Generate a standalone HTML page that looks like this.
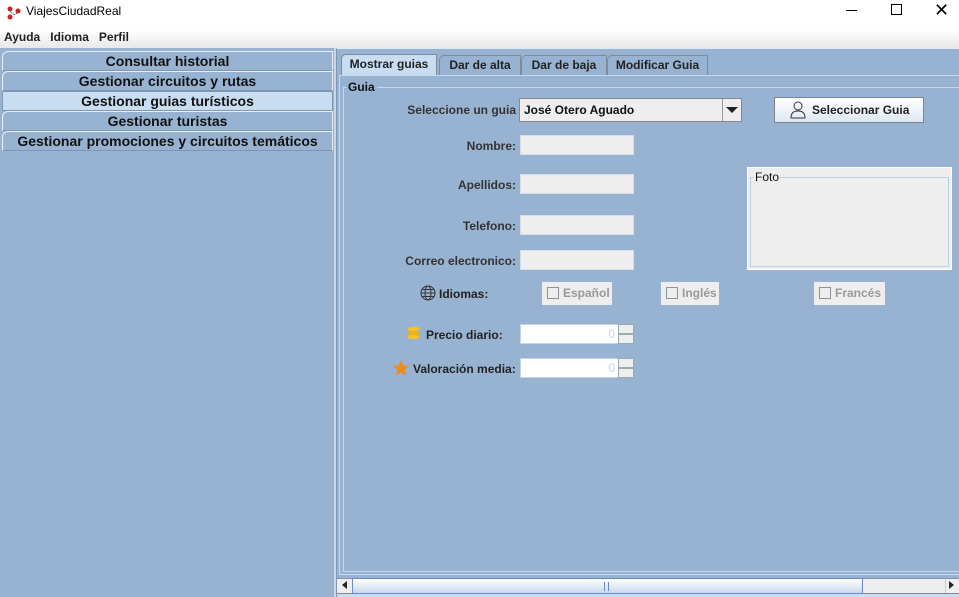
<!DOCTYPE html>
<html><head><style>
*{margin:0;padding:0;box-sizing:border-box}
body{width:959px;height:597px;position:relative;overflow:hidden;background:#98b3d1;font-family:"Liberation Sans",sans-serif;font-size:12px;font-weight:bold;color:#222}
.a{position:absolute}
.lb{text-align:right;color:#333}
.tf{position:absolute;background:#eeeeee;border:1px solid #d6dde6;height:20px;width:114px}
.nav{position:absolute;left:2px;width:331px;height:20px;border:1px solid #e8eef6;border-bottom-color:#7f95b0;background:#98b3d1;text-align:center;font-size:14px;line-height:18px;color:#111;border-radius:6px 0 0 0}
.tab{position:absolute;top:55px;height:20px;border:1px solid #7f8a99;border-bottom:none;background:#98b3d1;text-align:center;line-height:19px;font-size:12px;color:#222;border-radius:5px 0 0 0}
.cb{position:absolute;background:#eeeeee;height:23px;color:#999;line-height:23px;padding-left:5px}
.cb i{display:inline-block;width:12px;height:12px;border:1px solid #8a929c;vertical-align:-2px;margin-right:4px;background:#eee}
.sp{position:absolute;width:114px;height:20px;background:#fff;border:1px solid #c5d4e6;color:#c5d4e6;text-align:right;line-height:18px;padding-right:18px;font-weight:normal}
.sp b{position:absolute;right:-1px;width:16px;height:10px;border:1px solid #9aa;background:#eee}
</style></head><body>
<div class="a" style="left:0;top:0;width:959px;height:30px;background:#fff"></div>
<div class="a" style="left:6px;top:5px;width:14px;height:16px"><svg width="16" height="16"><circle cx="4" cy="4" r="2.5" fill="#c22"/><circle cx="4" cy="12" r="2.5" fill="#c22"/><circle cx="12" cy="6" r="2.5" fill="#c22"/><path d="M4 6 L8 10 L11 8" stroke="#333" stroke-dasharray="1 1" fill="none"/></svg></div>
<div class="a" style="left:26px;top:4px;font-weight:normal;font-size:12px;color:#000">ViajesCiudadReal</div>
<div class="a" style="left:846px;top:10px;width:11px;height:1px;background:#000"></div>
<div class="a" style="left:891px;top:4px;width:11px;height:11px;border:1px solid #000"></div>
<div class="a" style="left:934px;top:0px;font-size:18px;font-weight:normal;color:#000">✕</div>
<div class="a" style="left:0;top:30px;width:959px;height:18px;background:linear-gradient(#fff,#e8e8e8)"></div>
<div class="a" style="left:4px;top:30px;line-height:14px;padding-top:0;color:#222">Ayuda&nbsp;&nbsp;&nbsp;Idioma&nbsp;&nbsp;&nbsp;Perfil</div>
<div class="a" style="left:0;top:48px;width:336px;height:549px;background:#98b3d1;border-right:2px solid #c8d8ec"></div>
<div class="nav" style="top:51px">Consultar historial</div>
<div class="nav" style="top:71px">Gestionar circuitos y rutas</div>
<div class="nav" style="top:91px;background:#c8dcf2;border:1px solid #7f95b0;border-radius:0">Gestionar guias turísticos</div>
<div class="nav" style="top:111px">Gestionar turistas</div>
<div class="nav" style="top:131px">Gestionar promociones y circuitos temáticos</div>
<div class="a" style="left:336px;top:48px;width:623px;height:549px;border-left:1px solid #7f95b0;border-top:1px solid #e0e8f2"></div>
<div class="tab" style="left:341px;width:96px;background:#c8dcf2;top:54px;height:22px">Mostrar guias</div>
<div class="tab" style="left:439px;width:82px">Dar de alta</div>
<div class="tab" style="left:521px;width:86px">Dar de baja</div>
<div class="tab" style="left:607px;width:101px">Modificar Guia</div>
<div class="a" style="left:339px;top:75px;width:620px;height:500px;border:1px solid #c8d8ec;border-right:none"></div>
<div class="a" style="left:343px;top:87px;width:616px;height:485px;border:1px solid #c8d8ec;border-right:none"></div>
<div class="a" style="left:346px;top:80px;background:#98b3d1;padding:0 2px;color:#111">Guia</div>
<div class="a lb" style="left:380px;top:103px;width:136px">Seleccione un guia</div>
<div class="a" style="left:519px;top:98px;width:223px;height:24px;background:#eee;border:1px solid #888;padding-left:4px;line-height:22px;font-size:12px;color:#111">José Otero Aguado</div>
<div class="a" style="left:722px;top:99px;width:19px;height:22px;border-left:1px solid #999;background:#eee"></div>
<div class="a" style="left:726px;top:107px;width:0;height:0;border-left:6px solid transparent;border-right:6px solid transparent;border-top:6px solid #222"></div>
<div class="a" style="left:774px;top:97px;width:150px;height:26px;border:1px solid #7a8494;background:linear-gradient(#fff,#dce8f5);line-height:24px;padding-left:37px;color:#222">Seleccionar Guia</div>
<div class="a" style="left:790px;top:101px"><svg width="16" height="18"><circle cx="8" cy="5" r="4" fill="none" stroke="#333"/><path d="M1 17 Q1 10 8 10 Q15 10 15 17 Z" fill="none" stroke="#333"/></svg></div>
<div class="a lb" style="left:400px;top:139px;width:116px">Nombre:</div><div class="tf" style="left:520px;top:135px"></div>
<div class="a lb" style="left:400px;top:178px;width:116px">Apellidos:</div><div class="tf" style="left:520px;top:174px"></div>
<div class="a lb" style="left:400px;top:219px;width:116px">Telefono:</div><div class="tf" style="left:520px;top:215px"></div>
<div class="a lb" style="left:380px;top:254px;width:136px">Correo electronico:</div><div class="tf" style="left:520px;top:250px"></div>
<div class="a" style="left:747px;top:167px;width:205px;height:103px;background:#eee;border:1px solid #fff"></div>
<div class="a" style="left:750px;top:177px;width:199px;height:90px;border:1px solid #b8d0ea"></div>
<div class="a" style="left:754px;top:170px;background:#eee;padding:0 1px;font-weight:normal;color:#111">Foto</div>
<div class="a" style="left:420px;top:285px"><svg width="16" height="16"><circle cx="8" cy="8" r="7" fill="none" stroke="#333"/><ellipse cx="8" cy="8" rx="3" ry="7" fill="none" stroke="#333"/><path d="M1 8H15M2 4.5H14M2 11.5H14" stroke="#333"/></svg></div>
<div class="a" style="left:439px;top:287px">Idiomas:</div>
<div class="cb" style="left:542px;top:282px;width:70px"><i></i>Español</div>
<div class="cb" style="left:661px;top:282px;width:58px"><i></i>Inglés</div>
<div class="cb" style="left:814px;top:282px;width:71px"><i></i>Francés</div>
<div class="a" style="left:406px;top:326px;width:15px;height:15px"><svg width="15" height="15"><ellipse cx="7.5" cy="3" rx="6" ry="2.3" fill="#f2c230"/><ellipse cx="7.5" cy="7" rx="6.5" ry="2.3" fill="#e8b020"/><ellipse cx="7.5" cy="11" rx="6" ry="2.3" fill="#f2c230"/></svg></div>
<div class="a" style="left:426px;top:328px">Precio diario:</div>
<div class="sp" style="left:520px;top:324px">0<b style="top:-1px"></b><b style="top:9px"></b></div>
<div class="a" style="left:392px;top:359px"><svg width="18" height="18"><path d="M9 1L11.3 6.5 17 7 12.7 10.8 14 16.5 9 13.5 4 16.5 5.3 10.8 1 7 6.7 6.5Z" fill="#f08a1c"/></svg></div>
<div class="a" style="left:413px;top:362px">Valoración media:</div>
<div class="sp" style="left:520px;top:358px">0<b style="top:-1px"></b><b style="top:9px"></b></div>
<div class="a" style="left:337px;top:578px;width:622px;height:16px;background:#eee;border-top:1px solid #7f95b0;border-bottom:1px solid #888"></div>
<div class="a" style="left:342px;top:581px;width:0;height:0;border-top:4px solid transparent;border-bottom:4px solid transparent;border-right:5px solid #222"></div>
<div class="a" style="left:352px;top:578px;width:511px;height:16px;border:1px solid #6a8cc8;background:linear-gradient(#fff,#c8d8ee)"></div>
<div class="a" style="left:604px;top:582px;width:5px;height:9px;border-left:1px solid #6a8cc8;border-right:1px solid #6a8cc8"></div>
<div class="a" style="left:945px;top:579px;width:1px;height:14px;background:#ccc"></div>
<div class="a" style="left:949px;top:581px;width:0;height:0;border-top:4px solid transparent;border-bottom:4px solid transparent;border-left:5px solid #222"></div>
<div class="a" style="left:337px;top:594px;width:622px;height:3px;background:#c8dcf2"></div>
</body></html>
